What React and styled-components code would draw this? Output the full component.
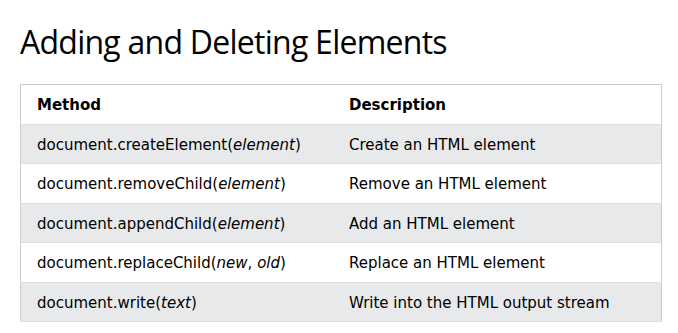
import React from "react";
import styled, { createGlobalStyle } from "styled-components";

const Global = createGlobalStyle`
  html, body { margin: 0; padding: 0; background: #fff; }
  body { font-family: "DejaVu Sans", Verdana, sans-serif; color: #000; }
`;

const Page = styled.div`
  padding: 20px 16px 0 20px;
`;

const Title = styled.h1`
  font-family: "Open Sans", "Noto Sans", sans-serif;
  font-weight: 400;
  font-size: 32px;
  letter-spacing: -0.75px;
  line-height: 44px;
  margin: 0 0 20px 0;
  color: #000;
`;

const Table = styled.table`
  width: 642px;
  border-collapse: collapse;
  border: 1px solid #ccc;
  font-size: 15px;
  line-height: 1.5;
`;

const Row = styled.tr`
  background: ${(p) => (p.$striped ? "#e7e9eb" : "#fff")};
  border-bottom: 1px solid #ddd;
`;

const Head = styled.th`
  text-align: left;
  font-weight: 700;
  padding: 9px 8px 7px;
  width: 50%;
  &:first-child { padding-left: 16px; }
`;

const Cell = styled.td`
  padding: 9px 8px 7px;
  vertical-align: top;
  &:first-child { padding-left: 16px; }
`;

const Arg = styled.i`
  font-style: italic;
`;

const rows = [
  ["createElement", ["element"], "Create an HTML element"],
  ["removeChild", ["element"], "Remove an HTML element"],
  ["appendChild", ["element"], "Add an HTML element"],
  ["replaceChild", ["new", "old"], "Replace an HTML element"],
  ["write", ["text"], "Write into the HTML output stream"],
];

export default function App() {
  return (
    <>
      <Global />
      <Page>
        <Title>Adding and Deleting Elements</Title>
        <Table>
          <thead>
            <Row>
              <Head>Method</Head>
              <Head>Description</Head>
            </Row>
          </thead>
          <tbody>
            {rows.map(([m, args, d], i) => (
              <Row key={m} $striped={i % 2 === 0}>
                <Cell>
                  document.{m}(
                  {args.map((a, j) => (
                    <React.Fragment key={a}>
                      {j > 0 && ", "}
                      <Arg>{a}</Arg>
                    </React.Fragment>
                  ))}
                  )
                </Cell>
                <Cell>{d}</Cell>
              </Row>
            ))}
          </tbody>
        </Table>
      </Page>
    </>
  );
}
